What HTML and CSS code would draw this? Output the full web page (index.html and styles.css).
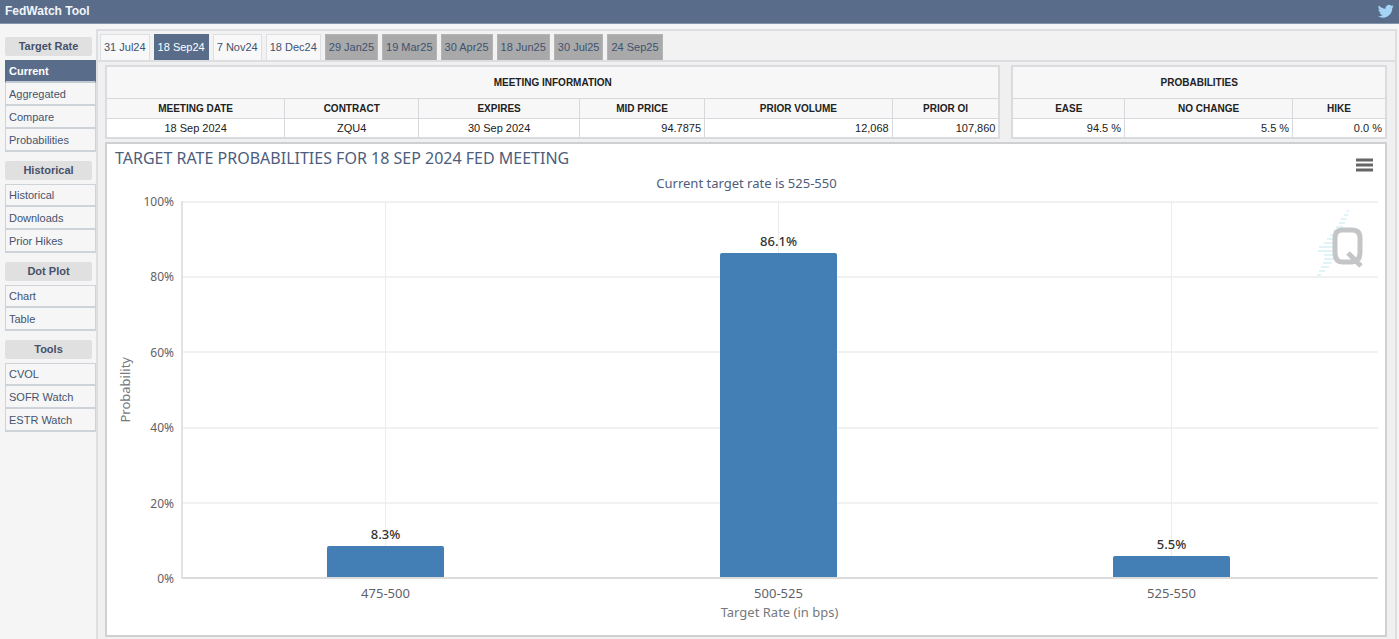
FILE: index.html
```
<!DOCTYPE html>
<html lang="en">
<head>
<meta charset="utf-8">
<title>FedWatch Tool</title>
<link rel="stylesheet" href="styles.css">
</head>
<body>
<header class="topbar">
  <h1 class="topbar-title">FedWatch Tool</h1>
  <a class="twitter" href="#" aria-label="Twitter">
    <svg viewBox="0 0 24 24" width="16" height="16"><path d="M23.6 4.9c-.9.4-1.8.6-2.8.8 1-.6 1.8-1.6 2.1-2.7-.9.6-2 1-3.1 1.200a4.900 4.900 0 0 0-8.300 4.500C7.400 8.500 3.800 6.500 1.400 3.600a4.900 4.900 0 0 0 1.500 6.500c-.8 0-1.600-.2-2.200-.6v.1c0 2.400 1.700 4.300 3.900 4.800-.7.2-1.500.2-2.200.1.600 1.900 2.400 3.300 4.600 3.400A9.900 9.900 0 0 1 0 19.900 13.900 13.900 0 0 0 7.500 22c9.100 0 14.200-7.700 13.900-14.600.9-.7 1.600-1.500 2.200-2.500z"/></svg>
  </a>
</header>
<div class="shell">
  <nav class="sidebar">
    <section class="group">
      <h2 class="group-title">Target Rate</h2>
      <a class="item active" href="#">Current</a>
      <a class="item" href="#">Aggregated</a>
      <a class="item" href="#">Compare</a>
      <a class="item" href="#">Probabilities</a>
    </section>
    <section class="group">
      <h2 class="group-title">Historical</h2>
      <a class="item" href="#">Historical</a>
      <a class="item" href="#">Downloads</a>
      <a class="item" href="#">Prior Hikes</a>
    </section>
    <section class="group">
      <h2 class="group-title">Dot Plot</h2>
      <a class="item" href="#">Chart</a>
      <a class="item" href="#">Table</a>
    </section>
    <section class="group">
      <h2 class="group-title">Tools</h2>
      <a class="item" href="#">CVOL</a>
      <a class="item" href="#">SOFR Watch</a>
      <a class="item" href="#">ESTR Watch</a>
    </section>
  </nav>
  <main class="content">
    <div class="tabs">
      <button class="tab">31 Jul24</button>
      <button class="tab active">18 Sep24</button>
      <button class="tab">7 Nov24</button>
      <button class="tab">18 Dec24</button>
      <button class="tab far">29 Jan25</button>
      <button class="tab far">19 Mar25</button>
      <button class="tab far">30 Apr25</button>
      <button class="tab far">18 Jun25</button>
      <button class="tab far">30 Jul25</button>
      <button class="tab far">24 Sep25</button>
    </div>
    <div class="view">
      <div class="tables">
        <table class="info meeting">
          <colgroup><col class="w-date"><col class="w-contract"><col class="w-expires"><col class="w-price"><col class="w-volume"><col class="w-oi"></colgroup>
          <thead>
            <tr class="caption"><th colspan="6">MEETING INFORMATION</th></tr>
            <tr><th>MEETING DATE</th><th>CONTRACT</th><th>EXPIRES</th><th>MID PRICE</th><th>PRIOR VOLUME</th><th>PRIOR OI</th></tr>
          </thead>
          <tbody>
            <tr><td>18 Sep 2024</td><td>ZQU4</td><td>30 Sep 2024</td><td class="num">94.7875</td><td class="num">12,068</td><td class="num">107,860</td></tr>
          </tbody>
        </table>
        <table class="info probs">
          <colgroup><col class="w-ease"><col class="w-same"><col class="w-hike"></colgroup>
          <thead>
            <tr class="caption"><th colspan="3">PROBABILITIES</th></tr>
            <tr><th>EASE</th><th>NO CHANGE</th><th>HIKE</th></tr>
          </thead>
          <tbody>
            <tr><td class="num">94.5 %</td><td class="num">5.5 %</td><td class="num">0.0 %</td></tr>
          </tbody>
        </table>
      </div>
      <section class="chart">
        <div class="chart-head">
          <h2 class="chart-title">TARGET RATE PROBABILITIES FOR 18 SEP 2024 FED MEETING</h2>
          <button class="menu" aria-label="Chart menu">
            <svg viewBox="0 0 17 14" width="17" height="14"><path d="M0 2h17M0 7h17M0 12h17"/></svg>
          </button>
        </div>
        <p class="subtitle">Current target rate is 525-550</p>
        <div class="chart-body">
          <div class="y-title"><span>Probability</span></div>
          <ol class="y-axis"><li>100%</li><li>80%</li><li>60%</li><li>40%</li><li>20%</li><li>0%</li></ol>
          <div class="plot">
            <div class="lines"><i></i><i></i><i></i><i></i><i></i></div>
            <svg class="watermark" viewBox="0 0 48 70" width="48" height="70">
              <g class="bolt"><path d="M31 1l2 0M28 5l4 0M25 9l5 0M23 13l6 0M20 17l7 0M17 21l8 0M14 25l8 0M11 29l8 0M8 33l10 0M3 37l15 0M2 41l16 0M8 45l10 0M8 49l10 0M7 53l9 0M5 57l8 0M3 61l6 0M1 65l4 0"/></g>
              <path class="letter" d="M26 20h10q8 0 8 8v14q0 10-8 10H26q-7 0-7-10V28q0-8 7-8zM32 43l13 13"/>
            </svg>
            <div class="slot"><span class="value">8.3%</span><div class="bar" style="height:8.3%"></div></div>
            <div class="slot"><span class="value">86.1%</span><div class="bar" style="height:86.1%"></div></div>
            <div class="slot"><span class="value">5.5%</span><div class="bar" style="height:5.5%"></div></div>
          </div>
          <div class="x-axis"><span>475-500</span><span>500-525</span><span>525-550</span></div>
          <div class="x-title">Target Rate (in bps)</div>
        </div>
      </section>
    </div>
  </main>
</div>
</body>
</html>
```
FILE: styles.css
```
* { box-sizing: border-box; }
body {
  margin: 0;
  height: 100vh;
  min-height: 500px;
  display: flex;
  flex-direction: column;
  background: #f5f5f5;
  color: #3d4b66;
  font-family: "Liberation Sans", Arial, sans-serif;
  font-size: 11px;
}
h1, h2, p, ol { margin: 0; padding: 0; }
button { font: inherit; cursor: pointer; }

.topbar {
  flex: none;
  display: flex;
  justify-content: space-between;
  align-items: center;
  height: 24px;
  padding: 0 5px 2px;
  background: #596d8b;
  border-bottom: 1px solid #8494aa;
}
.topbar-title { font-size: 12px; color: #f2f5f9; }
.twitter { display: flex; }
.twitter svg { fill: #a5d3f5; }

.shell { flex: 1; min-height: 0; display: flex; padding: 5px 2px 0 5px; }

.sidebar { flex: none; width: 91px; padding-top: 8px; }
.group { display: flex; flex-direction: column; margin-bottom: 9px; }
.group-title {
  height: 19px;
  line-height: 19px;
  margin: 0 4px 4px 0;
  background: #e0e0e0;
  border-radius: 2px;
  text-align: center;
  font-size: 11px;
  color: #46516a;
}
.item {
  height: 23px;
  line-height: 21px;
  padding-left: 3px;
  border: 1px solid #ced2d9;
  border-bottom-width: 2px;
  background: #f6f6f6;
  color: #46536e;
  text-decoration: none;
}
.item + .item { border-top-width: 0; line-height: 22px; }
.item.active { background: #596d8b; border-color: #596d8b #596d8b #c3cad4; color: #fff; font-weight: bold; }

.content {
  flex: 1;
  min-width: 0;
  display: flex;
  flex-direction: column;
  border: 2px solid #dcdee1;
  border-bottom: 0;
}
.tabs {
  flex: none;
  display: flex;
  align-items: flex-end;
  gap: 4px;
  height: 31px;
  padding: 0 2px;
  background: #f2f2f2;
  border-bottom: 2px solid #dcdee1;
}
.tab {
  height: 26px;
  padding: 0 3px 2px;
  background: #f8f8f8;
  border: 1px solid #dcdfe3;
  border-bottom: 0;
  color: #3f5270;
}
.tab.active { background: #596d8b; border-color: #596d8b; color: #fff; }
.tab.far { background: #a9a9a9; border-color: #b4b4b4; }

.view { flex: 1; min-height: 0; display: flex; flex-direction: column; gap: 3px; padding: 3px 8px 2px 7px; background: #f0f0f0; }
.tables { flex: none; display: flex; gap: 11px; }
.info {
  table-layout: fixed;
  border-collapse: collapse;
  background: #fff;
  border: 2px solid #d9dbde;
  color: #222;
}
.meeting { flex: 897; }
.probs { flex: 375; }
.info th, .info td { border: 1px solid #d6d8dc; height: 20px; padding: 0 3px; text-align: center; }
.info th { background: #f7f7f7; font-size: 10px; }
.info .caption th { height: 32px; }
.info .num { text-align: right; }
.w-date { width: 20%; }
.w-contract { width: 15%; }
.w-expires { width: 18%; }
.w-price { width: 14%; }
.w-volume { width: 21%; }
.w-oi { width: 12%; }
.w-ease { width: 30%; }
.w-same { width: 45%; }
.w-hike { width: 25%; }

.chart {
  flex: 1;
  min-height: 0;
  display: flex;
  flex-direction: column;
  padding: 0 7px 12px 8px;
  background: #fff;
  border: 2px solid #cfd0d2;
  font-family: "Noto Sans", "Open Sans", sans-serif;
}
.chart-head { display: flex; justify-content: space-between; height: 28px; }
.chart-title { font-size: 16px; line-height: 28px; font-weight: normal; color: #4d5d7c; }
.menu { align-self: flex-end; display: flex; padding: 0; margin-right: 5px; background: none; border: 0; }
.menu svg { stroke: #666; stroke-width: 3; }
.subtitle { height: 29px; line-height: 22px; text-align: center; font-size: 13px; color: #4d5d7c; }

.chart-body {
  flex: 1;
  min-height: 0;
  display: grid;
  grid-template-columns: 20px 46px minmax(0, 1fr);
  grid-template-rows: minmax(0, 1fr) 24px 20px;
  color: #5f6268;
}
.y-title { display: flex; align-items: center; justify-content: center; font-size: 13px; color: #77797d; }
.y-title span { writing-mode: vertical-rl; rotate: 180deg; }
.y-axis {
  display: flex;
  flex-direction: column;
  justify-content: space-between;
  list-style: none;
  padding-right: 7px;
  font-size: 12px;
}
.y-axis li { display: flex; align-items: center; justify-content: flex-end; height: 0; }
.plot { position: relative; display: flex; padding: 0 10px 0 6px; border-left: 2px solid #e2e2e2; border-bottom: 2px solid #dcdcdc; }
.lines { position: absolute; inset: 0; display: grid; }
.lines i { border-top: 2px solid #f1f1f1; }
.slot {
  position: relative;
  flex: 1;
  display: flex;
  flex-direction: column;
  justify-content: flex-end;
  align-items: center;
  background: linear-gradient(#ececec, #ececec) center / 1px 100% no-repeat;
}
.bar { width: 30%; background: #437eb4; border-radius: 2px 2px 0 0; }
.value { line-height: 16px; margin-bottom: 4px; font-size: 13px; font-weight: 500; color: #333; }
.watermark { position: absolute; top: 9px; right: 14px; fill: none; }
.bolt { stroke: #dff3f9; stroke-width: 2; }
.letter { stroke: #c4c5c6; stroke-width: 5; }
.x-axis { grid-column: 3; display: flex; padding: 0 10px 0 8px; font-size: 13px; }
.x-axis span { flex: 1; text-align: center; line-height: 28px; }
.x-title { grid-column: 3; text-align: center; font-size: 13px; line-height: 18px; color: #77797d; }
```
